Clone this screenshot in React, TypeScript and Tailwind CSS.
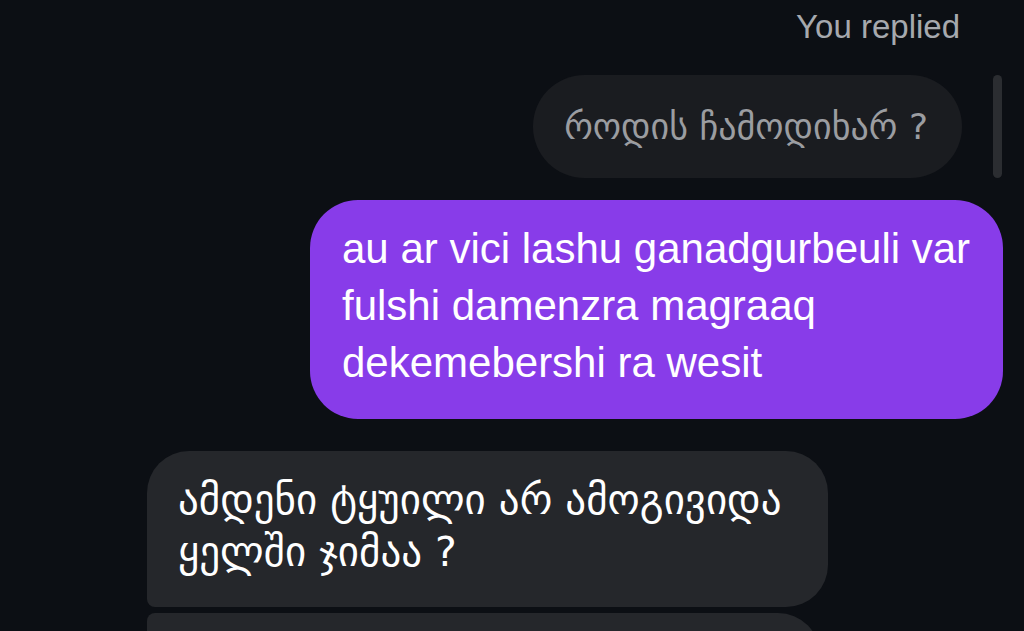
export default function App() {
  return (
    <div
      className="relative h-[631px] w-[1024px] overflow-hidden bg-[#0c0f14]"
      style={{ fontFamily: '"Liberation Sans", "DejaVu Sans", sans-serif' }}
    >
      <div className="flex flex-col">
        <div className="flex justify-end pr-[64px] pt-[7px] h-[75px]">
          <span className="text-[33px] leading-[40px] text-[#a6a9ae]">You replied</span>
        </div>

        <div className="flex justify-end pr-[62px]">
          <div className="flex h-[103px] items-center rounded-full bg-[#1a1c20] pl-[31px] pr-[34px]">
            <span className="text-[36px] text-[#9b9da1]" style={{ fontFamily: '"DejaVu Sans", sans-serif' }}>
              როდის ჩამოდიხარ ?
            </span>
          </div>
        </div>

        <div className="mt-[22px] flex justify-end pr-[21px]">
          <div className="w-[693px] rounded-[48px] bg-[#883ce9] pl-[32px] pr-[20px] pt-[20px] pb-[28px]">
            <p className="text-[42px] leading-[57px] text-white">
              au ar vici lashu ganadgurbeuli var fulshi damenzra magraaq dekemebershi ra wesit
            </p>
          </div>
        </div>

        <div className="mt-[32px] pl-[147px]">
          <div className="w-[681px] rounded-t-[42px] rounded-br-[42px] rounded-bl-[8px] bg-[#25272b] pl-[31px] pr-[20px] pt-[23px] pb-[29px]">
            <p
              className="text-[41px] leading-[52px] text-white"
              style={{ fontFamily: '"DejaVu Sans", sans-serif' }}
            >
              ამდენი ტყუილი არ ამოგივიდა ყელში ჯიმაა ?
            </p>
          </div>
          <div className="mt-[6px] h-[80px] w-[673px] rounded-tl-[8px] rounded-tr-[42px] bg-[#25272b]" />
        </div>
      </div>

      <div className="absolute left-[993px] top-[75px] h-[103px] w-[9px] rounded-full bg-[#2b2d31]" />
    </div>
  );
}
